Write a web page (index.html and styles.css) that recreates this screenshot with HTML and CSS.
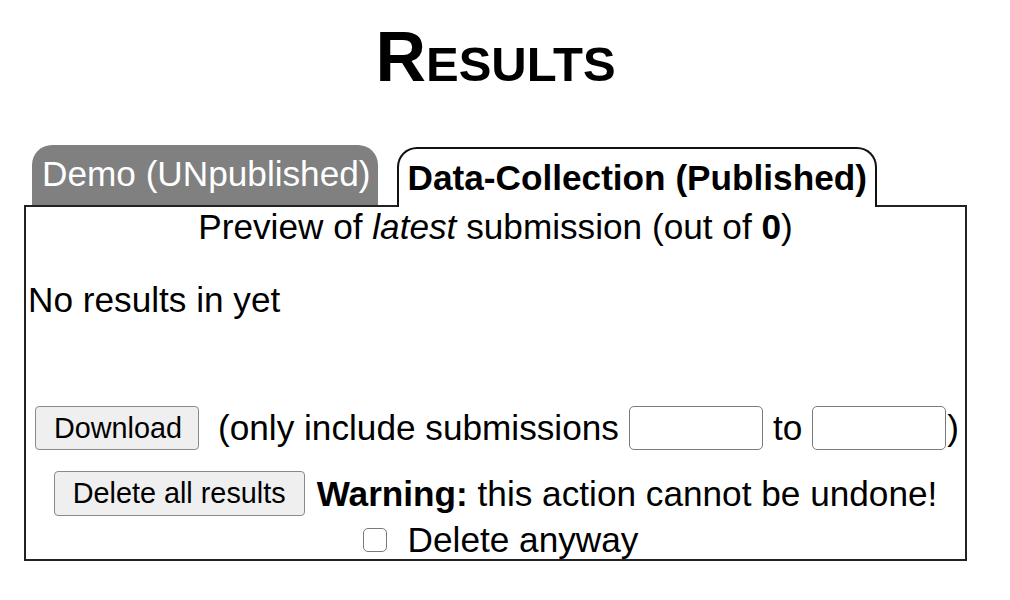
FILE: index.html
```html
<!DOCTYPE html>
<html>
<head>
<meta charset="utf-8">
<title>Results</title>
<link rel="stylesheet" href="styles.css">
</head>
<body>
<div class="page">
  <h1 class="title">Results</h1>
  <div class="tabs">
    <div class="tab tab-inactive">Demo (UNpublished)</div>
    <div class="tab tab-active">Data-Collection (Published)</div>
  </div>
  <div class="panel">
    <p class="preview">Preview of <i>latest</i> submission (out of <b>0</b>)</p>
    <p class="empty">No results in yet</p>
    <div class="row row-download">
      <button class="btn btn-download">Download</button>
      <span class="label-range">(only include submissions</span>
      <input class="num" type="text">
      <span class="label-to">to</span>
      <input class="num" type="text"><span class="paren">)</span>
    </div>
    <div class="row row-delete">
      <button class="btn btn-delete">Delete all results</button>
      <span class="warning"><b>Warning:</b> this action cannot be undone!</span>
    </div>
    <div class="row row-confirm">
      <label class="confirm"><input class="check" type="checkbox"><span>Delete anyway</span></label>
    </div>
  </div>
</div>
</body>
</html>
```

FILE: styles.css
```css
html, body {
  margin: 0;
  padding: 0;
  background: #fff;
}

body {
  font-family: "Liberation Sans", Arial, Helvetica, sans-serif;
  font-size: 35.2px;
  color: #000;
}

.page {
  width: 943px;
  margin-left: 24px;
}

.title {
  margin: 22px 0 0 0;
  font-size: 70px;
  line-height: 70px;
  font-weight: bold;
  font-variant: small-caps;
  text-align: center;
}

.tabs {
  display: flex;
  align-items: flex-end;
  gap: 19px;
  margin-top: 53px;
  margin-left: 8px;
}

.tab {
  box-sizing: border-box;
  height: 60px;
  line-height: 58px;
  padding: 0 9px 0 9px;
  border-radius: 20px 20px 0 0;
  white-space: nowrap;
}

.tab-inactive {
  background: #808080;
  color: #fff;
  padding: 0 7px 0 10px;
}

.tab-active {
  position: relative;
  z-index: 1;
  height: 60px;
  margin-bottom: -2px;
  padding: 0 8px 0 9px;
  line-height: 58px;
  background: #fff;
  color: #000;
  font-weight: bold;
  border: 2px solid #111;
  border-bottom: none;
}

.panel {
  box-sizing: border-box;
  height: 356px;
  border: 2px solid #222;
  background: #fff;
}

.preview {
  margin: 0;
  line-height: 40px;
  text-align: center;
}

.empty {
  margin: 33px 0 0 2px;
  line-height: 40px;
}

.row {
  display: flex;
  justify-content: center;
  align-items: center;
  white-space: nowrap;
}

.row-download {
  margin-top: 86px;
  height: 44px;
}

.row-delete {
  margin-top: 21px;
  height: 45px;
}

.row-confirm {
  margin-top: 4px;
  height: 40px;
}

.btn {
  box-sizing: border-box;
  height: 44px;
  padding: 0 18px;
  font-family: "Liberation Sans", Arial, Helvetica, sans-serif;
  font-size: 28.8px;
  color: #000;
  background: #efefef;
  border: 1.5px solid #8a8a8a;
  border-radius: 4px;
}

.btn-download {
  width: 164px;
}

.btn-delete {
  width: 251px;
  height: 45px;
}

.label-range {
  margin-left: 19px;
  margin-right: 10px;
}

.label-to {
  margin: 0 10px;
}

.num {
  box-sizing: border-box;
  width: 134px;
  height: 44px;
  margin: 0;
  padding: 0 6px;
  font-size: 28px;
  border: 1.5px solid #7a7a7a;
  border-radius: 5px;
  background: #fff;
}

.paren {
  margin-left: 1px;
  margin-right: -3px;
}

.warning {
  margin-left: 12px;
}

.confirm {
  display: flex;
  align-items: center;
  margin-left: 10px;
}

.check {
  appearance: none;
  -webkit-appearance: none;
  box-sizing: border-box;
  width: 24px;
  height: 24px;
  margin: 0 21px 0 0;
  border: 1.5px solid #7a7a7a;
  border-radius: 5px;
  background: #fff;
}
```
